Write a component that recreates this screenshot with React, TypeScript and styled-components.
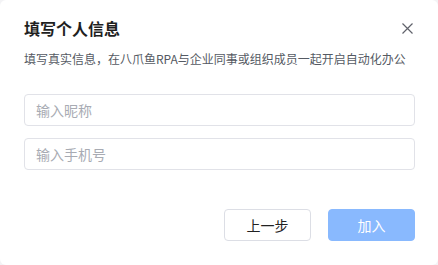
import React, { FC } from 'react';
import styled, { createGlobalStyle } from 'styled-components';

const GlobalStyle = createGlobalStyle`
  html, body {
    margin: 0;
    padding: 0;
    background: #f3f3f5;
  }
  * {
    box-sizing: border-box;
  }
`;

const Dialog = styled.div`
  width: 438px;
  height: 265px;
  background: #ffffff;
  border-radius: 6px;
  padding: 17px 23px 0 24px;
  font-family: 'Noto Sans CJK SC', 'Noto Sans', sans-serif;
  display: flex;
  flex-direction: column;
`;

const Header = styled.div`
  display: flex;
  align-items: center;
  justify-content: space-between;
  height: 22px;
`;

const Title = styled.h2`
  margin: 0;
  font-size: 16px;
  font-weight: 700;
  color: #1f1f1f;
  line-height: 22px;
`;

const CloseButton = styled.button`
  border: none;
  background: transparent;
  padding: 0;
  width: 14px;
  height: 14px;
  margin-right: 1px;
  display: flex;
  align-items: center;
  justify-content: center;
  cursor: pointer;
  color: #60626b;
`;

const Subtitle = styled.p`
  margin: 11px 0 0;
  font-size: 12px;
  line-height: 18px;
  color: #555a63;
  white-space: nowrap;
`;

const Fields = styled.div`
  display: flex;
  flex-direction: column;
  gap: 12px;
  margin-top: 26px;
`;

const Input = styled.input`
  width: 391px;
  height: 32px;
  border: 1px solid #e1e2e8;
  border-radius: 4px;
  padding: 0 11px;
  font-family: inherit;
  font-size: 14px;
  color: #333;
  outline: none;
  &::placeholder {
    color: #a8abb3;
  }
`;

const Footer = styled.div`
  display: flex;
  justify-content: flex-end;
  gap: 17px;
  margin-top: 39px;
`;

const Button = styled.button<{ $primary?: boolean }>`
  width: 87px;
  height: 32px;
  border-radius: 4px;
  font-family: inherit;
  font-size: 14px;
  cursor: pointer;
  border: 1px solid ${p => (p.$primary ? '#89b9fe' : '#dcdee5')};
  background: ${p => (p.$primary ? '#89b9fe' : '#ffffff')};
  color: ${p => (p.$primary ? '#ffffff' : '#222222')};
`;

const App: FC = () => {
  return (
    <>
      <GlobalStyle />
      <Dialog>
        <Header>
          <Title>填写个人信息</Title>
          <CloseButton aria-label="关闭">
            <svg width="11" height="11" viewBox="0 0 11 11">
              <path d="M0.5 0.5 L10.5 10.5 M10.5 0.5 L0.5 10.5" stroke="currentColor" strokeWidth="1.2" />
            </svg>
          </CloseButton>
        </Header>
        <Subtitle>填写真实信息，在八爪鱼RPA与企业同事或组织成员一起开启自动化办公</Subtitle>
        <Fields>
          <Input placeholder="输入昵称" />
          <Input placeholder="输入手机号" />
        </Fields>
        <Footer>
          <Button>上一步</Button>
          <Button $primary>加入</Button>
        </Footer>
      </Dialog>
    </>
  );
};

export default App;
